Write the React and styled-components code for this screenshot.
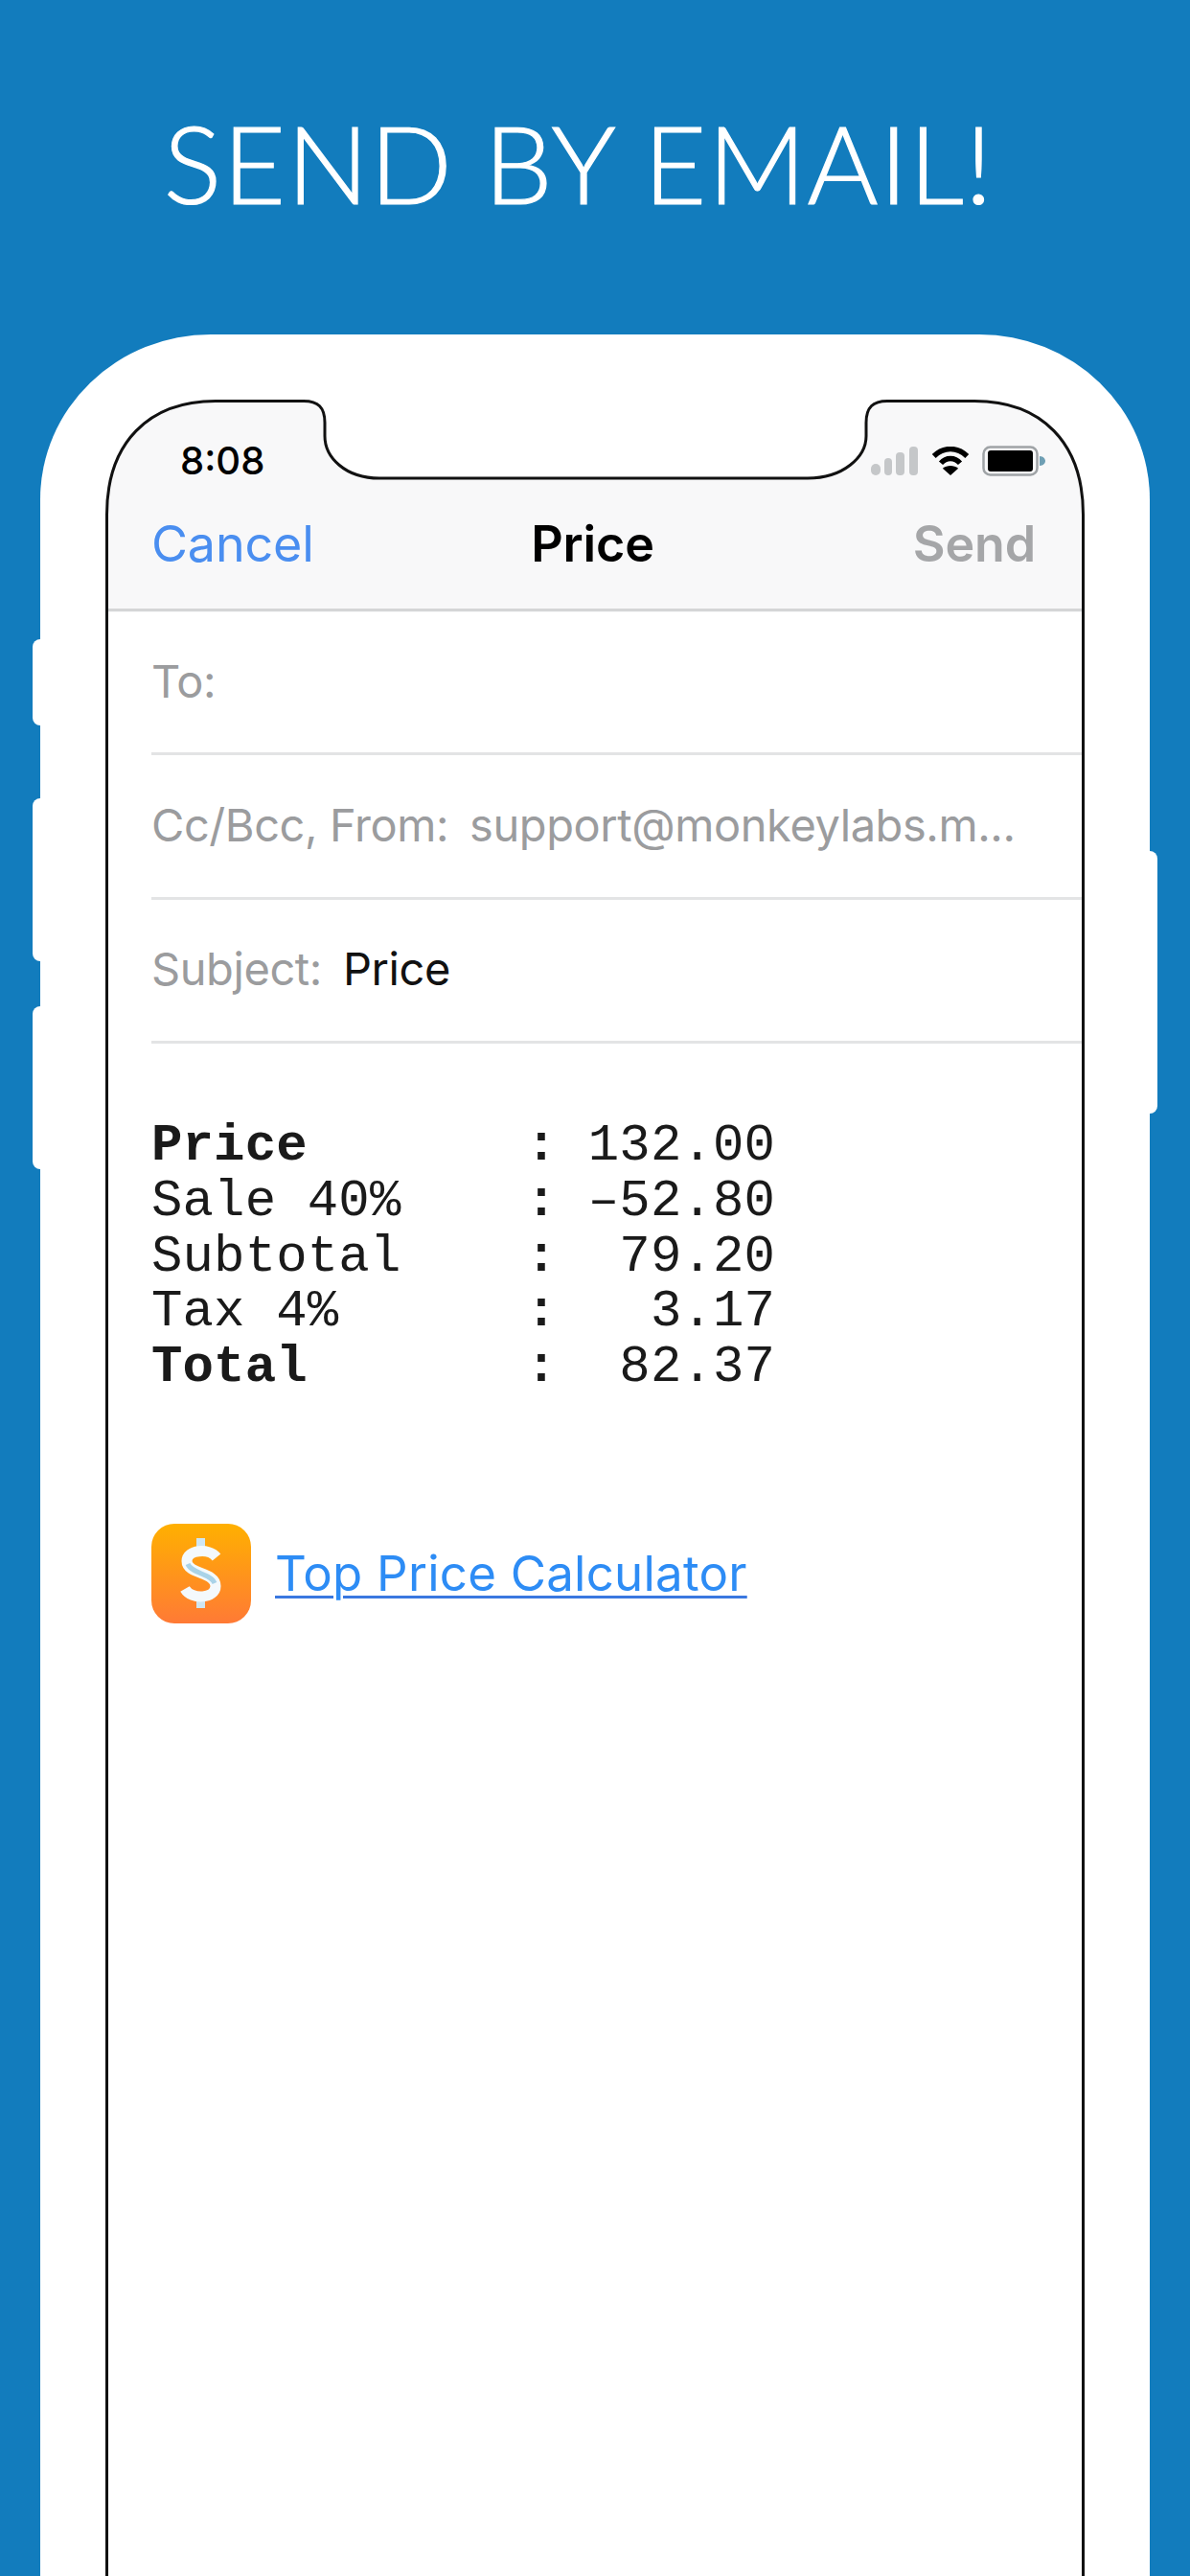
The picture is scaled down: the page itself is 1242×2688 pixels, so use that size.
import React from "react";
import styled, { createGlobalStyle } from "styled-components";

const Global = createGlobalStyle`
  html, body { margin: 0; padding: 0; background: #127cbd; }
  #root { width: 1242px; height: 2688px; overflow: hidden; }
`;

const Page = styled.div`
  width: 1242px;
  height: 2688px;
  background: #127cbd;
  overflow: hidden;
  display: flex;
  flex-direction: column;
  align-items: center;
`;

const Title = styled.h1`
  margin: 0 34px 0 0;
  height: 349px;
  padding-top: 101px;
  box-sizing: border-box;
  font-family: "Lato", sans-serif;
  font-weight: 300;
  font-size: 113px;
  line-height: 136px;
  color: #fff;
  white-space: nowrap;
  letter-spacing: 1.3px;
  -webkit-text-stroke: 1.2px #fff;
`;

const Phone = styled.div`
  position: relative;
  width: 1158px;
  flex: 1;
  box-sizing: border-box;
  padding: 68px 68px 0;
  background: #fff;
  border-radius: 178px 178px 0 0 / 172px 172px 0 0;
`;

const SideButton = styled.div`
  position: absolute;
  top: ${(p) => p.$top}px;
  height: ${(p) => p.$h}px;
  width: 10px;
  background: #fff;
  ${(p) => (p.$right ? "right: -8px; border-radius: 0 8px 8px 0;" : "left: -8px; border-radius: 8px 0 0 8px;")}
`;

const Screen = styled.div`
  height: 100%;
  display: flex;
  flex-direction: column;
`;

const Chrome = styled.header`
  position: relative;
  height: 221px;
  flex: none;
`;

const Outline = styled.svg`
  position: absolute;
  left: 0;
  top: 0;
  width: 1022px;
  height: 222px;
`;

const StatusRow = styled.div`
  position: relative;
  height: 120px;
  display: flex;
  justify-content: space-between;
  box-sizing: border-box;
  padding: 41px 40px 0 78px;
`;

const Time = styled.span`
  font-family: "Inter", sans-serif;
  font-weight: 500;
  font-size: 40px;
  line-height: 46px;
  color: #000;
`;

const StatusIcons = styled.div`
  display: flex;
  align-items: center;
  height: 46px;
  gap: 13px;
`;

const NavBar = styled.div`
  position: relative;
  height: 101px;
  margin: 0 3px;
  box-sizing: border-box;
  border-bottom: 3px solid #d4d5d6;
  display: grid;
  grid-template-columns: 1fr auto 1fr;
  align-items: start;
  padding: 0 48px 0 45px;
  font-family: "Inter", sans-serif;
  font-size: 52px;
  line-height: 62px;
  letter-spacing: -0.15px;
`;

const NavAction = styled.span`
  color: ${(p) => p.$c};
  font-weight: ${(p) => p.$w};
  justify-self: ${(p) => (p.$end ? "end" : "start")};
`;

const NavTitle = styled.span`
  color: #000;
  font-weight: 600;
  margin-right: 2px;
`;

const Content = styled.main`
  flex: 1;
  border: solid #111;
  border-width: 0 3px;
`;

const Fields = styled.div`
  padding-left: 45px;
`;

const FieldRow = styled.div`
  height: 150.4px;
  box-sizing: border-box;
  border-bottom: 3px solid #e3e4e5;
  padding-bottom: 3px;
  display: flex;
  align-items: center;
  gap: 22px;
  font-family: "Inter", sans-serif;
  font-size: 47px;
  letter-spacing: -0.42px;
  white-space: nowrap;
`;

const Label = styled.span`
  color: #9b9c9e;
`;

const Value = styled.span`
  color: ${(p) => (p.$dark ? "#111" : "#9b9c9e")};
`;

const Body = styled.div`
  padding: 78px 0 0 45px;
`;

const Receipt = styled.pre`
  margin: 0;
  font-family: "Liberation Mono", monospace;
  font-size: 54px;
  letter-spacing: 0.15px;
  line-height: 57.7px;
  color: #1a1a1a;
`;

const Strong = styled.b`
  font-weight: 700;
`;

const LinkRow = styled.div`
  margin-top: 134px;
  display: flex;
  align-items: center;
  gap: 25px;
`;

const AppIcon = styled.svg`
  width: 104px;
  height: 104px;
  flex: none;
`;

const AppLink = styled.a`
  font-family: "Inter", sans-serif;
  font-size: 51px;
  letter-spacing: 0.25px;
  color: #2d8cf5;
  text-decoration: underline;
  text-decoration-color: #3a78e0;
  text-decoration-thickness: 3px;
  text-underline-offset: 5px;
`;

const Signal = () => (
  <svg width="50" height="30" viewBox="0 0 50 30">
    <g fill="#c5c7c9">
      <rect x="0" y="18" width="10" height="12" rx="5" />
      <rect x="14" y="12" width="8" height="18" rx="4" />
      <rect x="26" y="6" width="9" height="24" rx="4" />
      <rect x="40" y="0" width="9" height="30" rx="4" />
    </g>
  </svg>
);

const Wifi = () => (
  <svg width="40" height="30" viewBox="0 0 44 33">
    <path d="M3 11 C14 0 30 0 41 11" fill="none" stroke="#000" strokeWidth="6" />
    <path d="M11 19 C17 12 27 12 33 19" fill="none" stroke="#000" strokeWidth="6" />
    <path d="M22 33 L13 25 C18 21 26 21 31 25 Z" fill="#000" />
  </svg>
);

const Battery = () => (
  <svg width="67" height="32" viewBox="0 0 67 32">
    <rect x="1.5" y="1.5" width="56" height="29" rx="7" fill="none" stroke="#9fa3a6" strokeWidth="2.5" />
    <rect x="6" y="5" width="47" height="22" rx="3" fill="#000" />
    <path d="M60 11 C64 11 66 14 66 16 C66 18 64 21 60 21 Z" fill="#6f9fb4" />
  </svg>
);

const OUTLINE =
  "M1.5 222 V120 C1.5 45 45 1.5 115 1.5 H207 C222 1.5 229 8 229 24 V38 C229 60 250 82 286 82 H733 C770 82 794 60 794 38 V24 C794 8 801 1.5 816 1.5 H907 C977 1.5 1020.5 45 1020.5 120 V222";

const rows = [
  { label: "Price", val: "132.00", bold: true },
  { label: "Sale 40%", val: "\u201352.80" },
  { label: "Subtotal", val: " 79.20" },
  { label: "Tax 4%", val: "  3.17" },
  { label: "Total", val: " 82.37", bold: true },
];

export default function App() {
  return (
    <Page>
      <Global />
      <Title>SEND BY EMAIL!</Title>
      <Phone>
        <SideButton $top={318} $h={90} />
        <SideButton $top={484} $h={170} />
        <SideButton $top={701} $h={170} />
        <SideButton $right $top={539} $h={274} />
        <Screen>
          <Chrome>
            <Outline viewBox="0 0 1022 222">
              <path d={OUTLINE + " Z"} fill="#f8f8f9" />
              <path d={OUTLINE} fill="none" stroke="#111" strokeWidth="3" />
            </Outline>
            <StatusRow>
              <Time>8:08</Time>
              <StatusIcons>
                <Signal />
                <Wifi />
                <Battery />
              </StatusIcons>
            </StatusRow>
            <NavBar>
              <NavAction $c="#4a8ef0" $w={400}>Cancel</NavAction>
              <NavTitle>Price</NavTitle>
              <NavAction $c="#a5a6a8" $w={600} $end>Send</NavAction>
            </NavBar>
          </Chrome>
          <Content>
            <Fields>
              <FieldRow><Label>To:</Label></FieldRow>
              <FieldRow>
                <Label>Cc/Bcc, From:</Label>
                <Value>support@monkeylabs.m...</Value>
              </FieldRow>
              <FieldRow>
                <Label>Subject:</Label>
                <Value $dark>Price</Value>
              </FieldRow>
            </Fields>
            <Body>
              <Receipt>
                {rows.map((r) => (
                  <div key={r.label}>
                    {r.bold ? <Strong>{r.label}</Strong> : r.label}
                    {" ".repeat(12 - r.label.length)}
                    <Strong>:</Strong> {r.val}
                  </div>
                ))}
              </Receipt>
              <LinkRow>
                <AppIcon viewBox="0 0 104 104">
                  <defs>
                    <linearGradient id="ic" x1="0" y1="0" x2="0" y2="1">
                      <stop offset="0" stopColor="#ffb000" />
                      <stop offset="1" stopColor="#ff7a35" />
                    </linearGradient>
                  </defs>
                  <rect width="104" height="104" rx="24" fill="url(#ic)" />
                  <rect x="47" y="15" width="9" height="14" fill="#cfe6f2" />
                  <rect x="47" y="74" width="9" height="14" fill="#cfe6f2" />
                  <path
                    d="M68 35 C60 25 37 27 37 39 C37 53 67 50 67 65 C67 78 42 80 35 68"
                    fill="none"
                    stroke="#f4f9fc"
                    strokeWidth="11"
                  />
                  <path
                    d="M38 42 C42 52 62 52 66 62"
                    fill="none"
                    stroke="#a9d3e8"
                    strokeWidth="5"
                  />
                </AppIcon>
                <AppLink>Top Price Calculator</AppLink>
              </LinkRow>
            </Body>
          </Content>
        </Screen>
      </Phone>
    </Page>
  );
}
